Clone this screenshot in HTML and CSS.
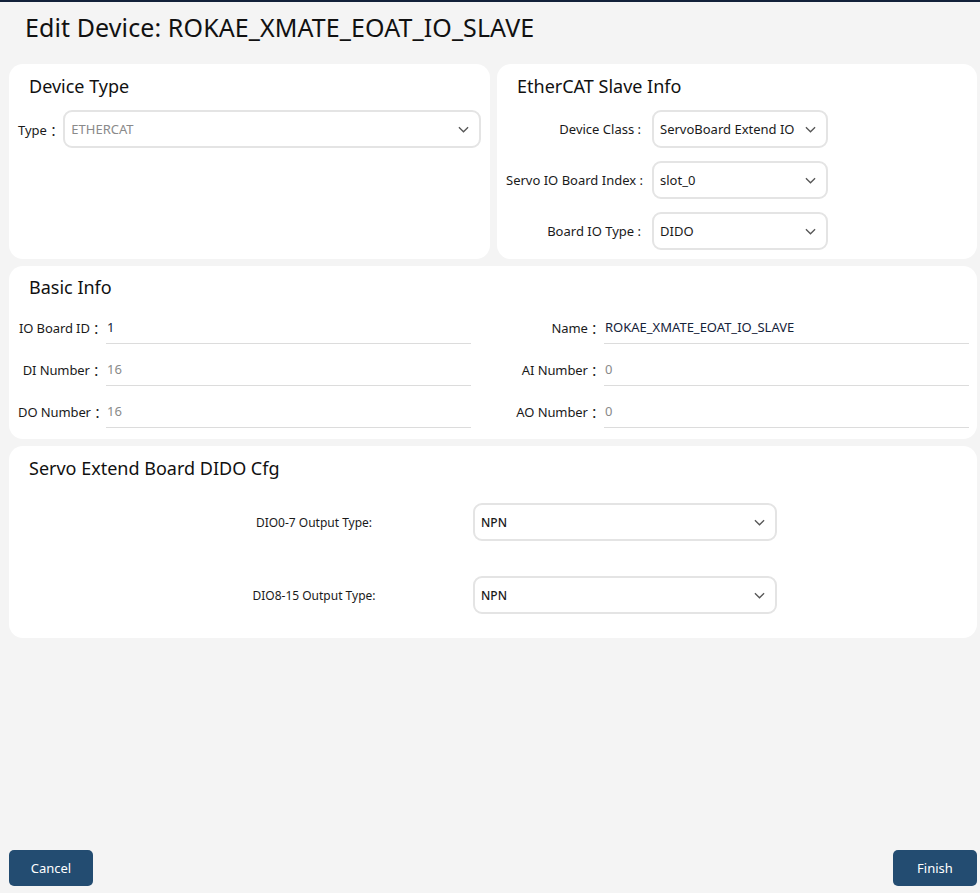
FILE: index.html
```html
<!DOCTYPE html>
<html lang="en">
<head>
<meta charset="utf-8">
<title>Edit Device</title>
<link rel="stylesheet" href="styles.css">
</head>
<body>
<div class="page">
  <h1 class="page-title">Edit Device: ROKAE_XMATE_EOAT_IO_SLAVE</h1>

  <div class="top-row">
    <section class="card card-type">
      <h2 class="card-title">Device Type</h2>
      <div class="type-row">
        <span class="label">Type ：</span>
        <div class="select select-wide muted">
          <span>ETHERCAT</span>
          <svg class="chev" viewBox="0 0 12 7"><path d="M1 1l5 5 5-5"/></svg>
        </div>
      </div>
    </section>

    <section class="card card-slave">
      <h2 class="card-title">EtherCAT Slave Info</h2>
      <div class="slave-grid">
        <span class="label">Device Class :</span>
        <div class="select select-narrow">
          <span>ServoBoard Extend IO</span>
          <svg class="chev" viewBox="0 0 12 7"><path d="M1 1l5 5 5-5"/></svg>
        </div>
        <span class="label">Servo IO Board Index :</span>
        <div class="select select-narrow">
          <span>slot_0</span>
          <svg class="chev" viewBox="0 0 12 7"><path d="M1 1l5 5 5-5"/></svg>
        </div>
        <span class="label">Board IO Type :</span>
        <div class="select select-narrow">
          <span>DIDO</span>
          <svg class="chev" viewBox="0 0 12 7"><path d="M1 1l5 5 5-5"/></svg>
        </div>
      </div>
    </section>
  </div>

  <section class="card card-basic">
    <h2 class="card-title">Basic Info</h2>
    <div class="basic-grid">
      <div class="field">
        <span class="label">IO Board ID ：</span>
        <div class="line-input"><span class="value">1</span></div>
      </div>
      <div class="field">
        <span class="label">Name ：</span>
        <div class="line-input"><span class="value">ROKAE_XMATE_EOAT_IO_SLAVE</span></div>
      </div>
      <div class="field">
        <span class="label">DI Number ：</span>
        <div class="line-input"><span class="value muted">16</span></div>
      </div>
      <div class="field">
        <span class="label">AI Number ：</span>
        <div class="line-input"><span class="value muted">0</span></div>
      </div>
      <div class="field">
        <span class="label">DO Number ：</span>
        <div class="line-input"><span class="value muted">16</span></div>
      </div>
      <div class="field">
        <span class="label">AO Number ：</span>
        <div class="line-input"><span class="value muted">0</span></div>
      </div>
    </div>
  </section>

  <section class="card card-dido">
    <h2 class="card-title">Servo Extend Board DIDO Cfg</h2>
    <div class="dido-grid">
      <span class="dido-label">DIO0-7 Output Type:</span>
      <div class="select select-dido">
        <span>NPN</span>
        <svg class="chev" viewBox="0 0 12 7"><path d="M1 1l5 5 5-5"/></svg>
      </div>
      <span class="dido-label">DIO8-15 Output Type:</span>
      <div class="select select-dido">
        <span>NPN</span>
        <svg class="chev" viewBox="0 0 12 7"><path d="M1 1l5 5 5-5"/></svg>
      </div>
    </div>
  </section>

  <footer class="actions">
    <button class="btn">Cancel</button>
    <button class="btn">Finish</button>
  </footer>
</div>
</body>
</html>
```

FILE: styles.css
```css
* {
  box-sizing: border-box;
}

html, body {
  margin: 0;
  height: 100%;
}

body {
  background: #f4f4f4;
  border-top: 2px solid #12213a;
  font-family: "Noto Sans", "Noto Sans CJK SC", sans-serif;
  color: #1a1a1a;
  font-size: 13px;
}

.page {
  display: flex;
  flex-direction: column;
  gap: 7px;
  height: 891px;
  padding: 0 3px 7px 9px;
}

.page-title {
  margin: 0;
  height: 55px;
  padding: 9px 0 0 16px;
  font-size: 25px;
  font-weight: 400;
  line-height: 32px;
  letter-spacing: 0.1px;
  color: #111;
}

.top-row {
  display: flex;
  gap: 7px;
}

.card {
  background: #fff;
  border-radius: 14px;
  padding: 11px 9px 9px;
}

.card-type {
  width: 481px;
  height: 195px;
}

.card-slave {
  flex: 1;
  height: 195px;
}

.card-title {
  margin: 0 0 12px 11px;
  font-size: 18px;
  font-weight: 400;
  line-height: 23px;
  color: #111;
}

.label {
  white-space: nowrap;
  color: #1a1a1a;
}

.muted {
  color: #8a8a8a !important;
}

.select {
  display: flex;
  align-items: center;
  justify-content: space-between;
  height: 38px;
  border: 2px solid #e4e4e4;
  border-radius: 9px;
  background: #fff;
  padding: 0 10px 0 6px;
  color: #1a1a1a;
}

.chev {
  width: 11px;
  height: 7px;
  fill: none;
  stroke: #555;
  stroke-width: 1.4;
}

.type-row {
  display: flex;
  align-items: center;
  gap: 0;
}

.select-wide {
  flex: 1;
}

.slave-grid {
  display: grid;
  grid-template-columns: 135px 176px;
  column-gap: 11px;
  row-gap: 13px;
  align-items: center;
}

.slave-grid .label {
  text-align: right;
}

.select-narrow {
  width: 176px;
}

.card-basic {
  height: 173px;
  padding-top: 10px;
}

.card-basic .card-title {
  margin-bottom: 3px;
}

.basic-grid {
  display: grid;
  grid-template-columns: 453px 453px;
  column-gap: 45px;
  row-gap: 0;
}

.field {
  display: flex;
  align-items: stretch;
  height: 42px;
}

.field .label {
  width: 88px;
  flex: none;
  text-align: right;
  padding-top: 16px;
  letter-spacing: -0.1px;
}

.line-input {
  flex: 1;
  border-bottom: 1px solid #dcdcdc;
  padding: 16px 0 0 1px;
}

.value {
  color: #15233a;
}

.card-dido {
  height: 192px;
}

.card-dido .card-title {
  margin-bottom: 23px;
}

.dido-grid {
  display: grid;
  grid-template-columns: 300px 304px;
  column-gap: 9px;
  row-gap: 35px;
  align-items: center;
  padding-left: 146px;
}

.dido-label {
  text-align: center;
  font-size: 12px;
}

.select-dido {
  width: 304px;
  font-weight: 500;
  font-size: 12px;
}

.actions {
  margin-top: auto;
  display: flex;
  justify-content: space-between;
}

.btn {
  width: 84px;
  height: 36px;
  border: none;
  border-radius: 5px;
  background: #234c71;
  color: #fff;
  font-family: inherit;
  font-size: 13px;
}
```
